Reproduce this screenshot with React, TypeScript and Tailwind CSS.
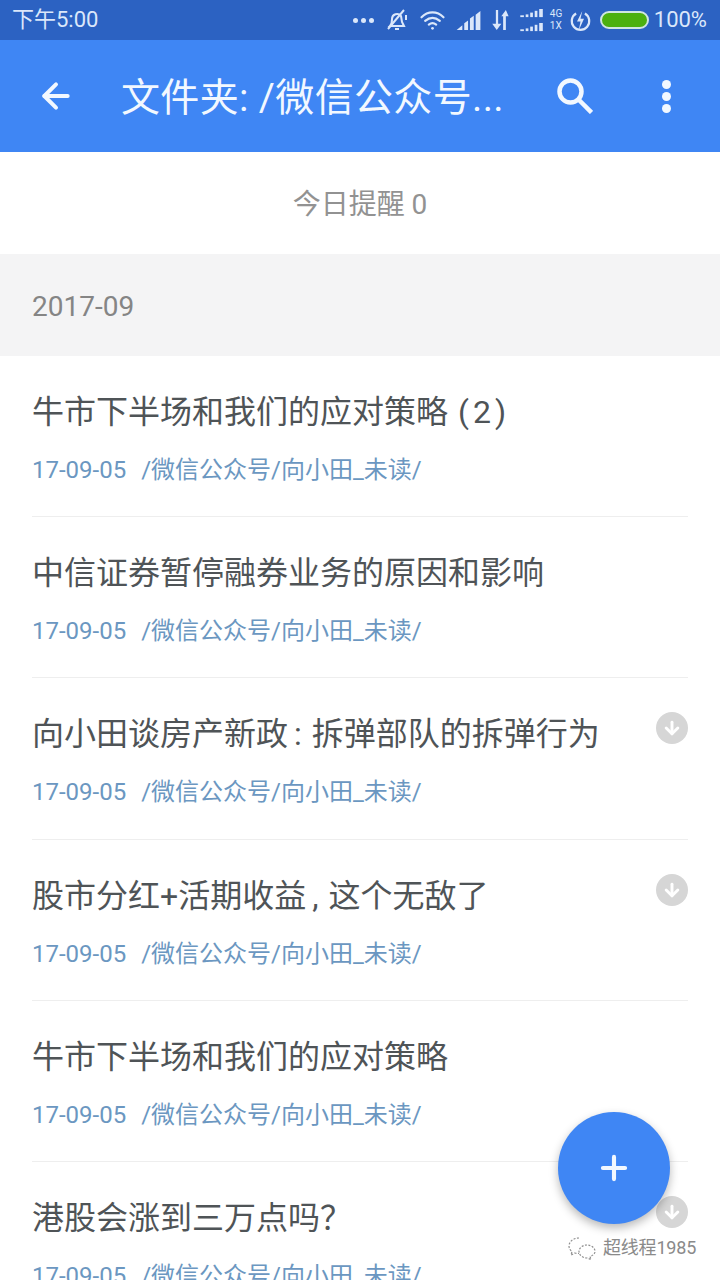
import type { ReactNode } from "react";
import { ArrowLeft, ArrowDown, Plus } from "lucide-react";

const FONT = "font-['Roboto','Noto_Sans_CJK_SC',sans-serif]";

const NOTES: { title: ReactNode; pending: boolean }[] = [
  {
    title: (
      <>
        牛市下半场和我们的应对策略<span className="ml-[10px] tracking-[4px]">(2)</span>
      </>
    ),
    pending: false,
  },
  { title: "中信证券暂停融券业务的原因和影响", pending: false },
  {
    title: (
      <>
        向小田谈房产新政<span className="mr-[10px] ml-[6px]">:</span>拆弹部队的拆弹行为
      </>
    ),
    pending: true,
  },
  {
    title: (
      <>
        股市分红+活期收益<span className="mr-[10px] ml-[6px]">,</span>这个无敌了
      </>
    ),
    pending: true,
  },
  { title: "牛市下半场和我们的应对策略", pending: false },
  { title: "港股会涨到三万点吗？", pending: true },
];

function Bars({ className }: { className?: string }) {
  return (
    <svg viewBox="0 0 26 10" className={className} fill="#dbe7fa">
      <rect x="0" y="7" width="4" height="2" />
      <rect x="6" y="6" width="3" height="3" />
      <rect x="11" y="4" width="3" height="5" />
      <rect x="16" y="2" width="3" height="7" />
      <rect x="21" y="0" width="4" height="9" />
    </svg>
  );
}

function StatusIcons() {
  return (
    <div className="flex items-center">
      <span className="mr-[11px] flex gap-[3px]">
        <i className="size-[5px] rounded-full bg-[#dbe7fa]" />
        <i className="size-[5px] rounded-full bg-[#dbe7fa]" />
        <i className="size-[5px] rounded-full bg-[#dbe7fa]" />
      </span>
      {/* muted bell */}
      <svg viewBox="0 0 24 24" className="mr-[10px] size-[24px]" fill="none" stroke="#dbe7fa" strokeWidth="2">
        <path d="M5 18c2-2 2-4 2-7a5 5 0 0 1 9-3l1 6 2 4H5Z" />
        <path d="M10 21h4M3 21 19 2" />
        <path d="M21 7v5" />
      </svg>
      {/* wifi */}
      <svg viewBox="0 0 28 24" className="mr-[10px] h-[22px] w-[27px]" fill="none" stroke="#dbe7fa" strokeWidth="2.4" strokeLinecap="round">
        <path d="M2 9c7-7 17-7 24 0" />
        <path d="M6 13c5-4 11-4 16 0" />
        <path d="M10 17c2.500-2 5.500-2 8 0" />
        <circle cx="14" cy="21" r="1.500" fill="#dbe7fa" stroke="none" />
      </svg>
      {/* signal */}
      <svg viewBox="0 0 26 20" className="mr-[8px] h-[19px] w-[26px]" fill="#dbe7fa">
        <path d="M0 20 6 15v5ZM8 13l4-3v10H8ZM14 8l4-3v15h-4ZM20 4l5-4v20h-5Z" />
      </svg>
      {/* data arrows */}
      <svg viewBox="0 0 20 22" className="mr-[10px] h-[20px] w-[19px]" fill="#dbe7fa">
        <path d="M6 0h2.500v15H12l-5 7-5-7h4ZM12 7l5-7 3 7h-3v15h-3V7Z" />
      </svg>
      <span className="mr-[5px] flex flex-col gap-[5px]">
        <Bars className="h-[9px] w-[26px]" />
        <Bars className="h-[9px] w-[26px]" />
      </span>
      <span className="mr-[6px] flex w-[14px] flex-col text-[10px] leading-[12px] text-[#dbe7fa]">
        <span>4G</span>
        <span>1X</span>
      </span>
      {/* charging */}
      <svg viewBox="0 0 24 24" className="mr-[9px] size-[21px]" fill="none" stroke="#dbe7fa" strokeWidth="2.500">
        <path d="M7 4a10 10 0 1 0 10 0" />
        <path d="M14 1 8 13h4l-2 10 6-13h-4Z" fill="#dbe7fa" stroke="none" />
      </svg>
      <span className="mr-[5px] flex h-[18px] w-[49px] rounded-full border-2 border-[#cfe6e0] bg-[#4bb00f]" />
      <span className="text-[22px] leading-none text-[#dbe7fa]">100%</span>
    </div>
  );
}

function NoteRow({ title, pending }: { title: ReactNode; pending: boolean }) {
  return (
    <div className="mx-[32px] h-[161.2px] shrink-0 border-b border-[#eeeeee] pt-[34px]">
      <div className="flex h-[40px] justify-between">
        <p className="translate-y-[2px] text-[32px] leading-[40px] whitespace-nowrap text-[#4f5457]">{title}</p>
        {pending && (
          <span className="flex size-[32px] items-center justify-center rounded-full bg-[#d6d6d6]">
            <ArrowDown className="size-[20px] text-white" strokeWidth={3.5} />
          </span>
        )}
      </div>
      <p className="mt-[24px] flex gap-[15px] text-[24px] leading-[32px] text-[#6b97c1]">
        <span>17-09-05</span>
        <span>/微信公众号/向小田_未读/</span>
      </p>
    </div>
  );
}

export default function App() {
  return (
    <div className={`relative flex h-[1280px] w-[720px] flex-col overflow-hidden bg-white ${FONT}`}>
      <div className="flex h-[40px] shrink-0 items-center justify-between bg-[#2c62c2] pr-[13px] pl-[12px]">
        <span className="text-[22px] leading-none text-[#dbe7fa]">下午5:00</span>
        <StatusIcons />
      </div>

      <div className="flex h-[112px] shrink-0 items-center bg-[#3f86f4] text-[#f2f8ff]">
        <ArrowLeft className="ml-[36px] size-[40px]" strokeWidth={2.4} />
        <h1 className="ml-[45px] w-[436px] translate-y-[2px] text-[39px] leading-none tracking-[0.35px] whitespace-nowrap">
          文件夹: /微信公众号...
        </h1>
        {/* search glass */}
        <svg viewBox="0 0 36 36" className="size-[36px]" fill="none" stroke="#f2f8ff" strokeWidth="4.500">
          <circle cx="13.500" cy="13.500" r="11" />
          <path d="m21.500 21.500 13 13" />
        </svg>
        <span className="ml-[69px] flex flex-col gap-[3px]">
          <i className="size-[9px] rounded-full bg-[#f2f8ff]" />
          <i className="size-[9px] rounded-full bg-[#f2f8ff]" />
          <i className="size-[9px] rounded-full bg-[#f2f8ff]" />
        </span>
      </div>

      <div className="flex h-[102px] shrink-0 items-center justify-center pt-[3px] text-[28px] text-[#929292]">
        今日提醒 0
      </div>

      <div className="flex h-[102px] shrink-0 items-center bg-[#f4f4f5] pt-[3px] pl-[32px] text-[28px] text-[#858585]">
        2017-09
      </div>

      {NOTES.map((note, i) => (
        <NoteRow key={i} title={note.title} pending={note.pending} />
      ))}

      <button className="absolute top-[1112px] left-[558px] flex size-[112px] items-center justify-center rounded-full bg-[#3f86f4] text-[#f2f8ff] shadow-[0_4px_10px_rgba(0,0,0,0.28)]">
        <Plus className="size-[38px]" strokeWidth={2.6} />
      </button>

      {/* account mark in the corner */}
      <div className="absolute top-[1234px] left-[568px] flex items-center gap-[7px] text-[#8a8a8a]">
        <svg viewBox="0 0 28 24" className="h-[24px] w-[28px]" fill="none" stroke="#8f8f8f" strokeWidth="1.200" strokeDasharray="2 1.500">
          <path d="M11 2C5 2 1 6 1 10c0 2.500 1.500 4.500 3 5.500L3 19l4-2c1.500.5 3 .5 4 .5" />
          <path d="M19 9c-4.500 0-8 3-8 6.500s3.500 6.500 8 6.500l4 1.500-1-3c3-1 5-3 5-5 0-3.500-3.500-6.500-8-6.500Z" />
        </svg>
        <span className="text-[18px] leading-[28px] tracking-[-0.2px] whitespace-nowrap [text-shadow:0_0_2px_white]">超线程1985</span>
      </div>
    </div>
  );
}
